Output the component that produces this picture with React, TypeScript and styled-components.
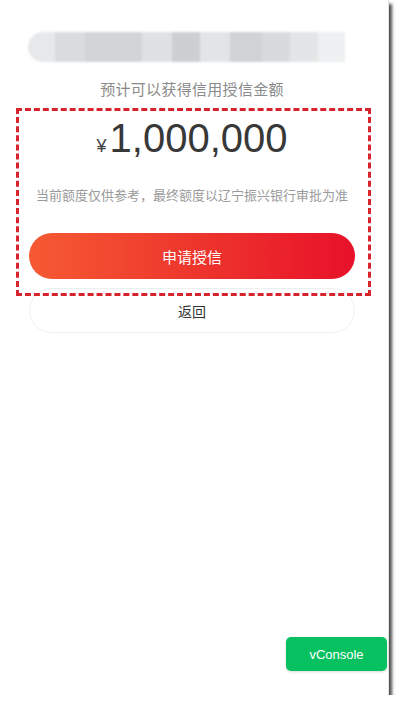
import React from "react";
import styled, { createGlobalStyle } from "styled-components";

const GlobalStyle = createGlobalStyle`
  html, body {
    margin: 0;
    padding: 0;
    background: #ffffff;
  }
  * {
    box-sizing: border-box;
  }
`;

const cjk = `"Noto Sans CJK SC", "Noto Sans", sans-serif`;

const Screen = styled.div`
  position: relative;
  width: 388px;
  height: 695px;
  padding-right: 4px;
  display: flex;
  flex-direction: column;
  align-items: center;
  background: #ffffff;
  box-shadow: 0 0 0 1px #e4e4e4, 4px 4px 3px rgba(0, 0, 0, 0.7);
  font-family: ${cjk};
`;

const Masked = styled.div`
  margin-top: 32px;
  margin-right: 12px;
  width: 317px;
  height: 30px;
  display: flex;
  filter: blur(1.2px);
`;

const Patch = styled.div<{ $w: number; $tone: string; $round?: boolean }>`
  width: ${(p) => p.$w}px;
  height: 100%;
  background: ${(p) => p.$tone};
  border-radius: ${(p) => (p.$round ? "15px 0 0 15px" : "0")};
`;

const Subtitle = styled.div`
  margin-top: 17px;
  font-size: 15px;
  line-height: 20px;
  color: #8a8a8a;
  letter-spacing: 0.3px;
`;

const Highlight = styled.section`
  position: relative;
  width: 100%;
  display: flex;
  flex-direction: column;
  align-items: center;

  &::after {
    content: "";
    position: absolute;
    top: 9px;
    bottom: -17px;
    left: 16px;
    right: 13px;
    border: 3px dashed #d7232b;
    pointer-events: none;
  }
`;

const Amount = styled.div`
  margin-top: 15px;
  height: 48px;
  font-family: "Liberation Sans", Arial, sans-serif;
  color: #383838;
  line-height: 48px;
  white-space: nowrap;
`;

const Currency = styled.span`
  font-size: 18px;
  line-height: 1;
  margin-right: 3px;
  color: #444444;
`;

const Figure = styled.span`
  font-size: 40px;
`;

const Note = styled.div`
  margin-top: 23px;
  font-size: 13px;
  line-height: 20px;
  color: #9a9a9a;
`;

const PillButton = styled.button<{ $primary?: boolean }>`
  width: 326px;
  height: ${(p) => (p.$primary ? 46 : 45)}px;
  margin-top: ${(p) => (p.$primary ? 28 : 9)}px;
  border-radius: 23px;
  font-family: ${cjk};
  font-size: ${(p) => (p.$primary ? 15 : 14)}px;
  cursor: pointer;
  border: ${(p) => (p.$primary ? "none" : "1px solid #efefef")};
  color: ${(p) => (p.$primary ? "#ffffff" : "#333333")};
  background: ${(p) =>
    p.$primary
      ? "linear-gradient(90deg, #f65a33 0%, #ee3a2d 45%, #e8112a 100%)"
      : "#ffffff"};
`;

const ConsoleButton = styled.button`
  position: absolute;
  right: 1px;
  bottom: 24px;
  width: 101px;
  height: 34px;
  border: none;
  border-radius: 5px;
  background: #07c160;
  color: #ffffff;
  font-family: "Liberation Sans", Arial, sans-serif;
  font-size: 13px;
  box-shadow: 0 1px 3px rgba(0, 0, 0, 0.15);
`;

const patches: [number, string][] = [
  [27, "#e7e8ea"],
  [30, "#d9dcdf"],
  [57, "#d2d5d8"],
  [30, "#dfe1e3"],
  [28, "#cdd0d3"],
  [30, "#e2e4e6"],
  [32, "#d0d3d6"],
  [28, "#d8dadd"],
  [28, "#e3e5e7"],
  [27, "#eef0f1"],
];

export default function App() {
  return (
    <>
      <GlobalStyle />
      <Screen>
        <Masked>
          {patches.map(([w, tone], i) => (
            <Patch key={i} $w={w} $tone={tone} $round={i === 0} />
          ))}
        </Masked>
        <Subtitle>预计可以获得信用授信金额</Subtitle>
        <Highlight>
          <Amount>
            <Currency>¥</Currency>
            <Figure>1,000,000</Figure>
          </Amount>
          <Note>当前额度仅供参考，最终额度以辽宁振兴银行审批为准</Note>
          <PillButton $primary>申请授信</PillButton>
        </Highlight>
        <PillButton>返回</PillButton>
        <ConsoleButton>vConsole</ConsoleButton>
      </Screen>
    </>
  );
}
